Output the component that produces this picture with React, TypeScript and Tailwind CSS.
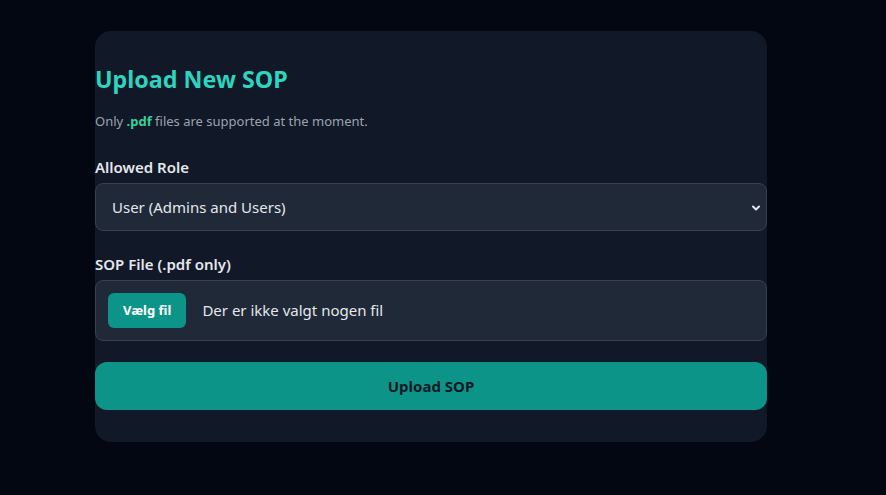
import { ChevronDown } from "lucide-react";

export default function App() {
  return (
    <div className="min-h-[495px] w-full bg-[#030712] pt-[31px] font-['Noto_Sans',sans-serif]">
      <div className="ml-[95px] w-[672px] rounded-2xl bg-[#111827] pt-8 pb-8">
        <h1 className="text-[23.3px] leading-8 font-bold text-[#2dd4bf]">Upload New SOP</h1>
        <p className="mt-4 text-[13px] leading-5 text-[#9ca3af]">
          Only <span className="font-bold text-[#34d399]">.pdf</span> files are supported at the moment.
        </p>

        <label className="mt-6 block text-[15px] leading-6 font-semibold text-[#e5e7eb]">Allowed Role</label>
        <div className="relative mt-1">
          <div className="flex h-12 items-center rounded-lg border border-[#374151] bg-[#1f2937] pl-4 text-[15px] text-[#e5e7eb]">
            User (Admins and Users)
          </div>
          <ChevronDown className="absolute right-[5px] top-[19px] h-3 w-3 text-[#e5e7eb]" strokeWidth={4} />
        </div>

        <label className="mt-[21px] block text-[15px] leading-6 font-semibold text-[#e5e7eb]">SOP File (.pdf only)</label>
        <div className="mt-1 flex items-center gap-4 rounded-lg border border-[#374151] bg-[#1f2937] p-3">
          <span className="flex h-[35px] items-center rounded-md bg-[#0d9488] px-[15px] text-[13px] font-bold text-white">
            Vælg fil
          </span>
          <span className="text-[15px] text-[#e5e7eb]">Der er ikke valgt nogen fil</span>
        </div>

        <button className="mt-[21px] h-12 w-full rounded-xl bg-[#0d9488] text-[15px] font-bold text-[#111827]">
          Upload SOP
        </button>
      </div>
    </div>
  );
}
